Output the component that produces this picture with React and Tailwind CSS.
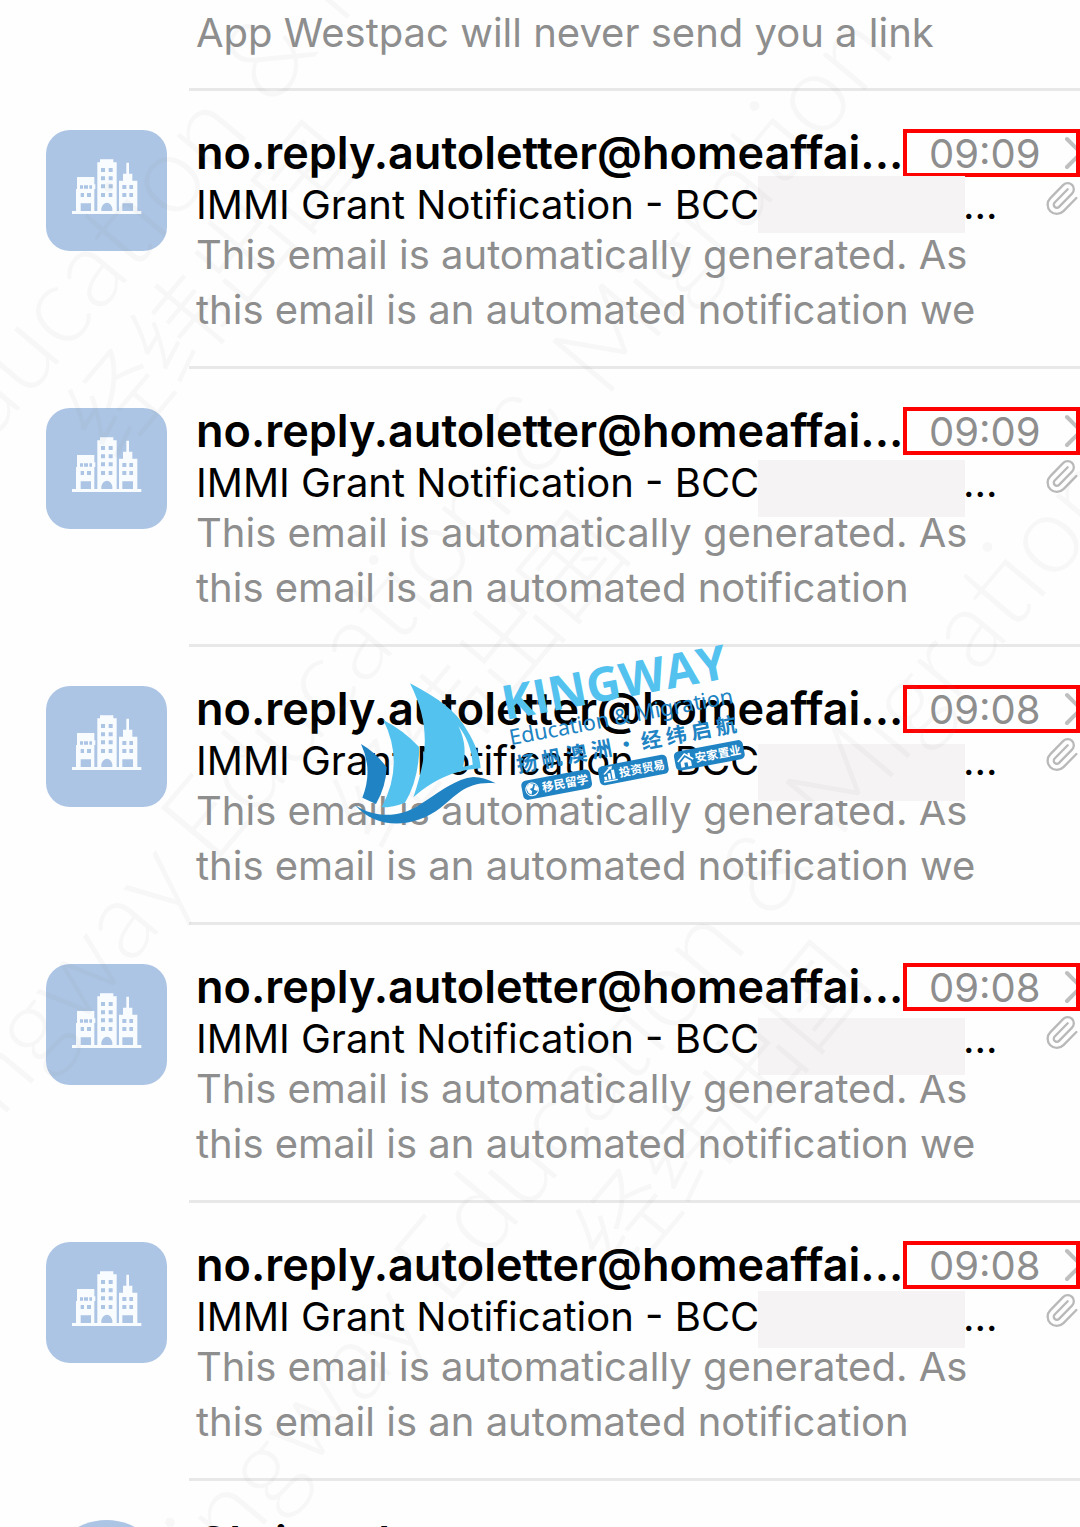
import React from 'react';
import { Paperclip } from 'lucide-react';

const mails = [
    { id: 1, time: '09:09', tail: ' we', mask: 'top-[85px]' },
    { id: 2, time: '09:09', tail: '', mask: 'top-[91px]' },
    { id: 3, time: '09:08', tail: ' we', mask: 'top-[97px]' },
    { id: 4, time: '09:08', tail: ' we', mask: 'top-[93px]' },
    { id: 5, time: '09:08', tail: '', mask: 'top-[88px]' },
];

// start of the latin line / start of the chinese line
const marks = [
    { id: 1, latin: [-52, 494], cjk: [114, 462] },
    { id: 2, latin: [213, 867], cjk: [379, 852] },
    { id: 3, latin: [446, 1308], cjk: [622, 1282] },
];

const BuildingIcon = () => (
    <svg className="w-full h-full" viewBox="48 60 363 363" fill="#f8fcff" aria-hidden="true">
        <path d="M126 303h208v9H126z" />
        <path fillRule="evenodd" d="M141 201h52v22h3v14h-3v67h-55v-67h3zM150 226v10h9v-10zM162 226v10h12v-10zM178 226v10h8v-10zM152 249v12h10v-12zM171 249v12h12v-12zM152 280v23h31v-23z" />
        <path fillRule="evenodd" d="M210 148h40v9h10v147h-58V157h8zM213 174v12h12v-12zM236 174v12h12v-12zM213 199v12h12v-12zM236 199v12h12v-12zM213 223v12h12v-12zM236 223v12h12v-12zM213 249v12h12v-12zM236 249v12h11v-12zM214 303h33v-8q-3-15-16-17q-14 2-17 17z" />
        <path fillRule="evenodd" d="M289 158h8v33h10v21h15v92h-55v-92h12v-21h10zM277 225v12h12v-12zM298 225v12h11v-12zM277 249v12h12v-12zM298 249v12h11v-12zM277 280v23h32v-23z" />
    </svg>
);

const ChevronIcon = () => (
    <svg className="w-5 h-9 shrink-0" viewBox="0 0 20 36" fill="none" stroke="#bfbfbf" strokeWidth="4" strokeLinecap="round" aria-hidden="true">
        <path d="M3 3l14 14L3 31" />
    </svg>
);

const MailRow = ({ mail }) => (
    <li className="relative flex">
        <div className="w-[121px] h-[121px] mt-[39px] ml-[46px] mr-[22px] shrink-0 rounded-3xl bg-[#adc5e4]">
            <BuildingIcon />
        </div>
        <div className="flex-1 min-w-0 pt-[37px] pb-[29px] pl-[7px] border-b-3 border-[#e8e8e8]">
            <div className="flex h-[52px]">
                <h2 className="flex-1 min-w-0 text-[45px] leading-[50px] font-semibold text-black whitespace-nowrap">
                    no.reply.autoletter@homeaffai...
                </h2>
                <div className="flex items-center justify-between w-[177px] h-[48px] mt-px shrink-0 pl-[22px] pt-0.5 border-4 border-[#ff0000] overflow-hidden">
                    <time className="text-[40px] leading-[36px] text-[#8e8e8e]">{mail.time}</time>
                    <div className="w-3 shrink-0">
                        <ChevronIcon />
                    </div>
                </div>
            </div>
            <div className="flex h-[47px]">
                <p className="w-[562px] shrink-0 text-[40px] leading-[50px] text-black whitespace-nowrap">
                    IMMI Grant Notification - BCC
                </p>
                <span className="w-[205px] shrink-0" />
                <span className="flex-1 text-[40px] leading-[50px] text-black">...</span>
                <Paperclip className="w-[37px] h-[37px] shrink-0 text-[#b9b9b9]" strokeWidth={1.5} />
            </div>
            <p className="text-[40px] leading-[55px] text-[#8e8e8e] whitespace-nowrap">
                This email is automatically generated. As<br />
                this email is an automated notification{mail.tail}
            </p>
        </div>
        <div className={`absolute left-[758px] w-[207px] h-[57px] bg-[#f5f3f4] ${mail.mask}`} />
    </li>
);

const Watermark = () => (
    <svg className="absolute top-0 left-0 w-[1080px] h-[1527px] pointer-events-none" viewBox="0 0 1080 1527" fill="#909090" fillOpacity="0.06" aria-hidden="true">
        {marks.map(mark => (
            <g key={mark.id}>
                <g transform={`translate(${mark.latin[0]} ${mark.latin[1]}) rotate(-50)`} className="font-['Lato',sans-serif] font-light" fontSize="110">
                    <text x="-22" textAnchor="end">Kingway</text>
                    <text>Education &amp; Migration</text>
                </g>
                <text transform={`translate(${mark.cjk[0]} ${mark.cjk[1]}) rotate(-50)`} className="font-['Noto_Sans_CJK_SC',sans-serif] font-light" fontSize="98">
                    经纬出国
                </text>
            </g>
        ))}
    </svg>
);

const Logo = () => (
    <svg className="absolute top-[630px] left-[340px] w-[420px] h-[210px] pointer-events-none" viewBox="0 0 1260 630">
        <g transform="translate(30 120)">
            <path fill="#54c2ee" fillRule="evenodd" d="M180 40C260 82 318 120 352 182C378 225 390 260 392 295C320 300 260 322 190 382C235 250 240 160 180 40zM325 168C348 215 346 250 340 290L368 284C366 240 350 200 325 168z" />
            <path fill="#54c2ee" d="M100 150Q160 180 208 232Q206 330 165 398Q130 412 95 412Q165 280 100 150z" />
            <path fill="#2083c3" d="M33 222Q78 248 110 292Q108 350 78 402L37 383Q70 300 33 222z" />
            <path fill="#2083c3" d="M15 405C80 448 150 440 205 407C270 365 320 325 370 321Q405 322 437 340C350 332 320 375 270 415C190 475 80 480 15 405z" />
        </g>
        <text transform="translate(496 270) rotate(-10.7)" className="font-['Open_Sans',sans-serif] font-bold" fontSize="142" fill="#54c2ee">KINGWAY</text>
        <text transform="translate(512 346) rotate(-10.7)" className="font-['Noto_Sans',sans-serif]" fontSize="65" fill="#2083c3">Education &amp; Migration</text>
        <text transform="translate(534 428) rotate(-10.7)" className="font-['Noto_Sans_CJK_SC',sans-serif] font-bold" fontSize="62" fill="#2083c3">扬 帆 澳 洲 · 经 纬 启 航</text>
        <g transform="translate(650 464) rotate(-10.7)">
            <rect x="-105" y="-29" width="210" height="58" rx="14" fill="#2083c3" />
            <circle cx="-75" r="19" fill="none" stroke="#fff" strokeWidth="3" />
            <path fill="#fff" d="M-92 -8l12-9 12 3-6 10-8 2 6 8-4 10-8-8zM-64 -12l8 10-4 10-10-6z" />
            <text x="-44" y="13" className="font-['Noto_Sans_CJK_SC',sans-serif] font-bold" fontSize="35" fill="#fff">移民留学</text>
        </g>
        <g transform="translate(880 420) rotate(-10.7)">
            <rect x="-105" y="-29" width="210" height="58" rx="14" fill="#2083c3" />
            <path fill="#fff" d="M-93 17h42v4h-42zM-90 4h8v11h-8zM-78 -4h8v19h-8zM-66 -12h9v27h-9zM-91 -4l20-16-5-3 15-1-4 12-3-4-19 14z" />
            <text x="-44" y="13" className="font-['Noto_Sans_CJK_SC',sans-serif] font-bold" fontSize="35" fill="#fff">投资贸易</text>
        </g>
        <g transform="translate(1108 376) rotate(-10.7)">
            <rect x="-105" y="-29" width="210" height="58" rx="14" fill="#2083c3" />
            <path fill="#fff" d="M-73 -21l10 8v-6h6v11l9 8-3 4-22-19-22 19-3-4zM-73 -8l16 14v15h-11V8h-10v13h-11V6z" />
            <text x="-44" y="13" className="font-['Noto_Sans_CJK_SC',sans-serif] font-bold" fontSize="35" fill="#fff">安家置业</text>
        </g>
    </svg>
);

export default function App() {
    return (
        <main className="relative h-screen overflow-hidden bg-[#fefefe] font-['Inter','Noto_Sans_CJK_SC',sans-serif]">
            <ul>
                <li className="pl-[189px]">
                    <p className="pt-[5px] pb-7 pl-[7px] border-b-3 border-[#e8e8e8] text-[40px] leading-[55px] text-[#8e8e8e] whitespace-nowrap">
                        App Westpac will never send you a link
                    </p>
                </li>
                {mails.map(mail => (
                    <MailRow key={mail.id} mail={mail} />
                ))}
                <li className="flex">
                    <div className="w-[121px] h-[121px] mt-[39px] ml-[46px] mr-[29px] shrink-0 rounded-full bg-[#adc5e4]" />
                    <h2 className="pt-[37px] text-[45px] leading-[50px] font-semibold text-black">Chrisstal</h2>
                </li>
            </ul>
            <Watermark />
            <Logo />
        </main>
    );
}
